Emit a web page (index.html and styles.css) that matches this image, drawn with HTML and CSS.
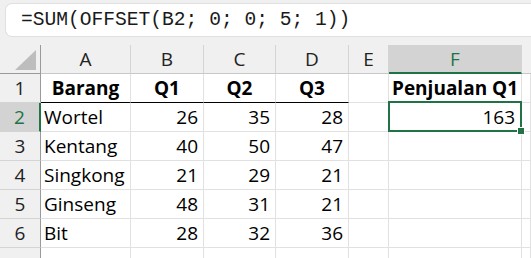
FILE: index.html
```html
<!DOCTYPE html>
<html>
<head>
<meta charset="utf-8">
<link rel="stylesheet" href="styles.css">
</head>
<body>
<div class="top">
  <div class="formula">=SUM(OFFSET(B2; 0; 0; 5; 1))</div>
</div>
<div class="sheet">
  <div class="c hd corner"><svg class="tri" width="22" height="21" viewBox="0 0 22 21"><polygon points="21,0 21,20 0,20" fill="#bdbdbd"/></svg></div>
  <div class="c hd">A</div>
  <div class="c hd">B</div>
  <div class="c hd">C</div>
  <div class="c hd">D</div>
  <div class="c hd">E</div>
  <div class="c hd hd-sel">F</div>
  <div class="c hd hd-last"></div>

  <div class="c rh">1</div>
  <div class="c b ctr tb">Barang</div>
  <div class="c b ctr tb">Q1</div>
  <div class="c b ctr tb">Q2</div>
  <div class="c b ctr tb">Q3</div>
  <div class="c"></div>
  <div class="c b ctr">Penjualan Q1</div>
  <div class="c"></div>

  <div class="c rh rh-sel">2</div>
  <div class="c">Wortel</div>
  <div class="c num">26</div>
  <div class="c num">35</div>
  <div class="c num">28</div>
  <div class="c"></div>
  <div class="c num sel">163<span class="selbox"><span class="handle"></span></span></div>
  <div class="c"></div>

  <div class="c rh">3</div>
  <div class="c">Kentang</div>
  <div class="c num">40</div>
  <div class="c num">50</div>
  <div class="c num">47</div>
  <div class="c"></div>
  <div class="c"></div>
  <div class="c"></div>

  <div class="c rh">4</div>
  <div class="c">Singkong</div>
  <div class="c num">21</div>
  <div class="c num">29</div>
  <div class="c num">21</div>
  <div class="c"></div>
  <div class="c"></div>
  <div class="c"></div>

  <div class="c rh">5</div>
  <div class="c">Ginseng</div>
  <div class="c num">48</div>
  <div class="c num">31</div>
  <div class="c num">21</div>
  <div class="c"></div>
  <div class="c"></div>
  <div class="c"></div>

  <div class="c rh">6</div>
  <div class="c">Bit</div>
  <div class="c num">28</div>
  <div class="c num">32</div>
  <div class="c num">36</div>
  <div class="c"></div>
  <div class="c"></div>
  <div class="c"></div>

  <div class="c rh last"></div>
  <div class="c last"></div>
  <div class="c last"></div>
  <div class="c last"></div>
  <div class="c last"></div>
  <div class="c last"></div>
  <div class="c last"></div>
  <div class="c last"></div>
</div>
</body>
</html>
```
FILE: styles.css
```css
html, body {
  margin: 0;
  padding: 0;
  background: #ffffff;
  overflow: hidden;
}
body {
  width: 531px;
  height: 258px;
  font-family: "Open Sans", sans-serif;
  font-size: 19px;
  color: #000;
}
.top {
  height: 45px;
  background: #f0f0f0;
  padding: 3px 0 0 5px;
  box-sizing: border-box;
}
.formula {
  height: 34px;
  background: #ffffff;
  border: 1px solid #e0e0e0;
  border-right: none;
  border-radius: 7px 0 0 7px;
  box-sizing: border-box;
  padding-left: 15px;
  font-family: "Liberation Mono", monospace;
  font-size: 19.6px;
  line-height: 32px;
  color: #1a1a1a;
  white-space: nowrap;
}
.sheet {
  display: grid;
  grid-template-columns: 41px 90px 73px 72px 73px 40px 133px 1fr;
  grid-template-rows: repeat(7, 29px) 11px;
}
.c {
  box-sizing: border-box;
  border-right: 1px solid #e1e1e1;
  border-bottom: 1px solid #e1e1e1;
  line-height: 28px;
  padding: 0 4px 0 3px;
  white-space: nowrap;
  overflow: visible;
  position: relative;
}
.c.last {
  border-bottom: none;
}
.hd {
  background: #f0f0f0;
  border-right-color: #d4d4d4;
  border-bottom-color: #c8c8c8;
  text-align: center;
  color: #222;
  padding: 0;
}
.corner {
  border-right-color: #9a9a9a;
  border-bottom-color: #9a9a9a;
}
.tri {
  position: absolute;
  left: 15px;
  top: 5px;
}
.hd-sel {
  background: #d3d3d3;
  color: #217346;
  border-bottom: 2px solid #217346;
}
.hd-last {
  border-right: none;
}
.rh {
  background: #f0f0f0;
  border-right-color: #9a9a9a;
  border-bottom-color: #d4d4d4;
  text-align: center;
  color: #222;
  padding: 0;
}
.rh-sel {
  background: #d3d3d3;
  color: #217346;
  border-right: 2px solid #217346;
}
.b {
  font-weight: 700;
}
.ctr {
  text-align: center;
  padding: 0;
}
.tb {
  border-bottom-color: #000;
}
.num {
  text-align: right;
  padding-right: 5px;
}
.sel {
  padding-right: 6px;
  z-index: 2;
}
.selbox {
  position: absolute;
  left: -1px;
  top: -2px;
  right: -1px;
  bottom: -1px;
  border: 2px solid #217346;
}
.handle {
  position: absolute;
  right: -5px;
  bottom: -5px;
  width: 6px;
  height: 6px;
  background: #217346;
  border: 1px solid #ffffff;
}
```
